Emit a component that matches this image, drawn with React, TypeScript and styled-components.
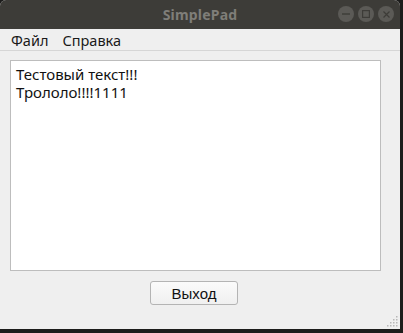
import React from 'react';
import styled, { createGlobalStyle } from 'styled-components';

const GlobalStyle = createGlobalStyle`
    html, body {
        margin: 0;
        padding: 0;
        background: #1c1c1b;
        overflow: hidden;
    }
`;

const Window = styled.div`
    width: 400px;
    height: 329px;
    display: flex;
    flex-direction: column;
    background: #efefef;
    border-radius: 6px 6px 0 0;
    overflow: hidden;
    font-family: 'Noto Sans', 'DejaVu Sans', sans-serif;
`;

const TitleBar = styled.div`
    height: 29px;
    flex: none;
    display: flex;
    align-items: center;
    justify-content: center;
    position: relative;
    background: #3d3c38;
`;

const Title = styled.span`
    color: #7f7e79;
    font-size: 14px;
    font-weight: bold;
    letter-spacing: 0.2px;
`;

const Controls = styled.div`
    position: absolute;
    right: 6px;
    top: 6px;
    display: flex;
    gap: 4px;
`;

const CtrlButton = styled.div`
    width: 16px;
    height: 16px;
    border-radius: 50%;
    background: #5b5a56;
    display: flex;
    align-items: center;
    justify-content: center;
`;

const MenuBar = styled.div`
    height: 21px;
    flex: none;
    display: flex;
    align-items: center;
    gap: 14px;
    padding: 0 0 0 11px;
    border-bottom: 1px solid #d6d6d6;
    background: #efefef;
`;

const MenuItem = styled.span`
    font-size: 14.5px;
    color: #1a1a1a;
`;

const Body = styled.div`
    flex: 1;
    display: flex;
    flex-direction: column;
    align-items: center;
    padding: 9px 19px 0 10px;
    position: relative;
`;

const Editor = styled.div`
    align-self: stretch;
    height: 211px;
    box-sizing: border-box;
    background: #ffffff;
    border: 1px solid #bdbdbd;
    padding: 4px 5px;
    font-size: 15px;
    line-height: 18px;
    color: #111;
`;

const Button = styled.button`
    margin: 10px 3px 0 0;
    width: 88px;
    height: 24px;
    box-sizing: border-box;
    border: 1px solid #b4b4b4;
    border-radius: 3px;
    background: linear-gradient(#fbfbfb, #f0f0f0);
    font-family: 'Liberation Sans', 'Noto Sans', sans-serif;
    font-size: 15px;
    color: #111;
    padding: 0;
`;

const Grip = styled.svg`
    position: absolute;
    right: 2px;
    bottom: 2px;
`;

const App: React.FC = () => {
    const dots: [number, number][] = [[9, 0], [6, 3], [9, 3], [3, 6], [6, 6], [9, 6], [0, 9], [3, 9], [6, 9], [9, 9]];
    return (
        <>
            <GlobalStyle />
            <Window>
                <TitleBar>
                    <Title>SimplePad</Title>
                    <Controls>
                        <CtrlButton>
                            <svg width="8" height="8" viewBox="0 0 8 8"><rect x="0" y="3.3" width="8" height="1.4" fill="#3d3c38" /></svg>
                        </CtrlButton>
                        <CtrlButton>
                            <svg width="8" height="8" viewBox="0 0 8 8"><rect x="0.6" y="0.6" width="6.8" height="6.8" fill="none" stroke="#3d3c38" strokeWidth="1.2" /></svg>
                        </CtrlButton>
                        <CtrlButton>
                            <svg width="7" height="7" viewBox="0 0 7 7"><path d="M0.5 0.5L6.5 6.5M6.5 0.5L0.5 6.5" stroke="#3d3c38" strokeWidth="1.2" /></svg>
                        </CtrlButton>
                    </Controls>
                </TitleBar>
                <MenuBar>
                    <MenuItem>Файл</MenuItem>
                    <MenuItem>Справка</MenuItem>
                </MenuBar>
                <Body>
                    <Editor>
                        Тестовый текст!!!<br />
                        Трололо!!!!1111
                    </Editor>
                    <Button>Выход</Button>
                    <Grip width="11" height="11" viewBox="0 0 11 11">
                        {dots.map(([x, y]) => (
                            <rect key={`${x}-${y}`} x={x} y={y} width="1.5" height="1.5" fill="#b8b8b8" />
                        ))}
                    </Grip>
                </Body>
            </Window>
        </>
    );
};

export default App;
